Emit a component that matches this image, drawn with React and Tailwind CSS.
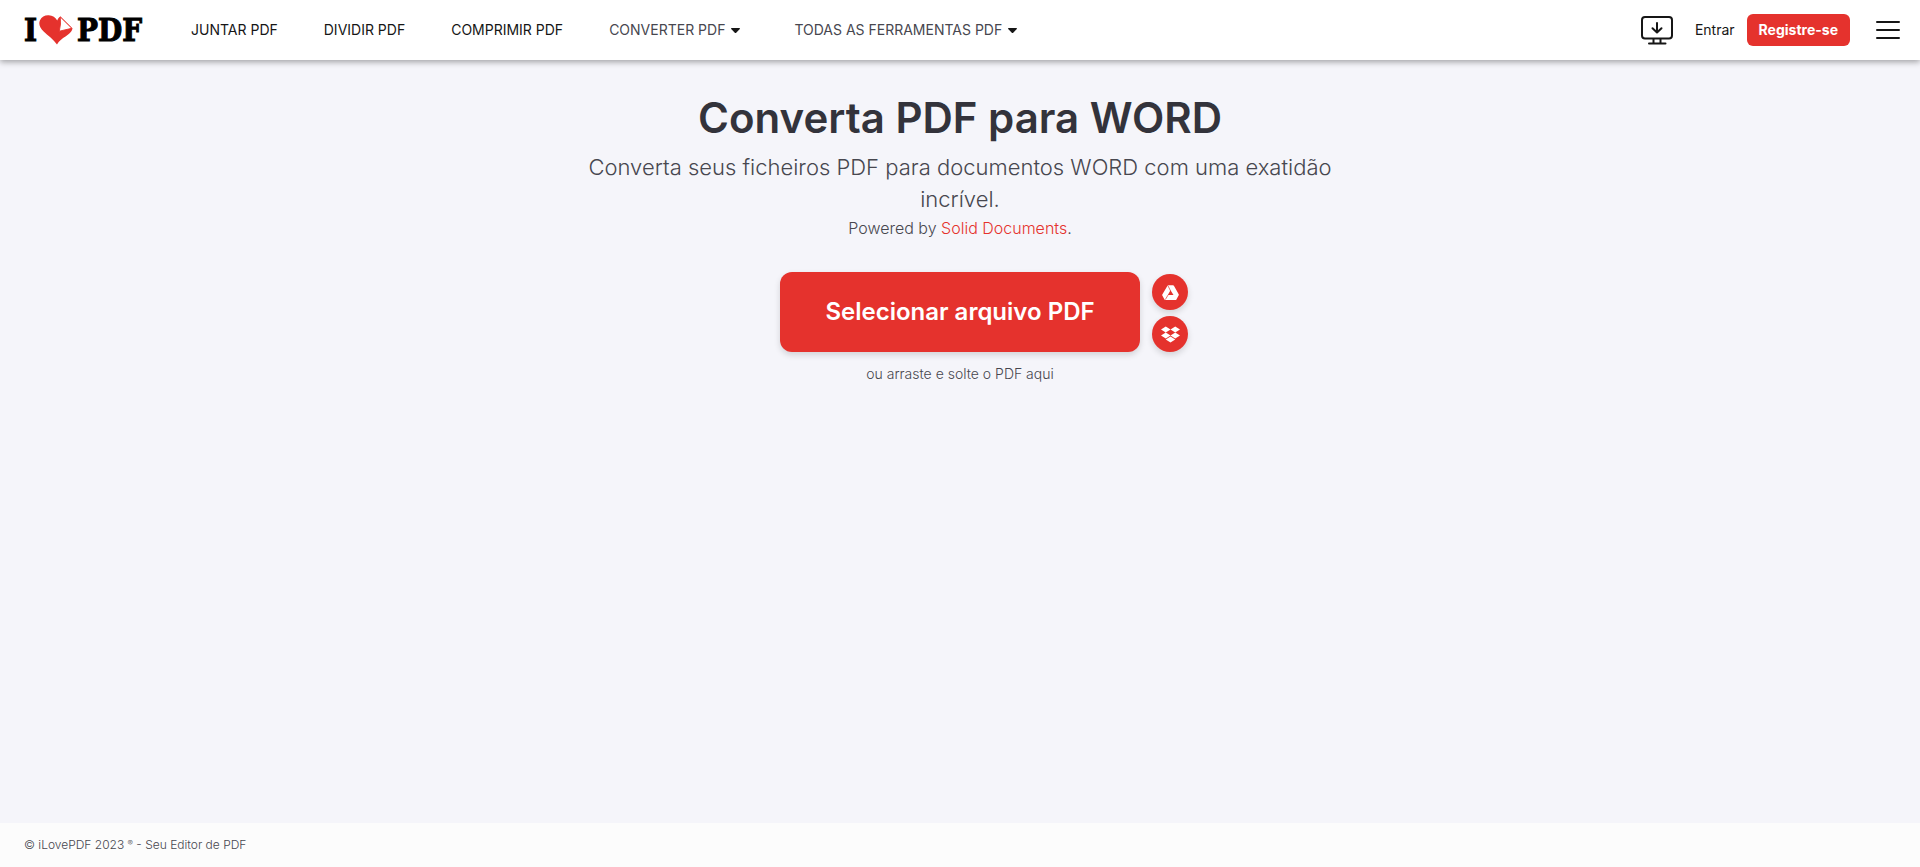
import { FaDropbox } from "react-icons/fa";

const mainLinks = ["JUNTAR PDF", "DIVIDIR PDF", "COMPRIMIR PDF"];
const menus = ["CONVERTER PDF", "TODAS AS FERRAMENTAS PDF"];

function Caret() {
  return (
    <svg className="h-[5px] w-[9px]" viewBox="0 0 9 5" aria-hidden="true">
      <path d="M0.6 0h7.8c.5 0 .7.5.4.9L5.2 4.7a1 1 0 0 1-1.4 0L.2.9C-.1.5.1 0 .6 0z" fill="#161616" />
    </svg>
  );
}

function Logo() {
  return (
    <a
      href="#"
      aria-label="iLovePDF"
      className="flex items-center font-['DejaVu_Serif_Condensed','DejaVu_Serif',serif] text-[31px] leading-8 font-bold text-black [-webkit-text-stroke:1px_#000]"
    >
      <span>I</span>
      <svg className="ml-0.5 h-[30px] w-[34px]" viewBox="0 0 34 30" aria-hidden="true">
        <path
          d="M18 29.400C14.600 24.400 8.800 20.600 4.400 16.200C.6 12.400-.6 8.600 1 5.200C2.600 1.600 6.200-.1 9.800.2C13.400.4 16.800 2.400 18.200 5.600C18.700 4 19.800 2.400 21.400 1.500L33.600 13.500C31.800 20.400 21.800 22.400 18 29.400z"
          fill="#e5322d"
        />
        <path d="M21.300 1.900L32.800 13.300L20.300 16.200Q22.200 9 21.300 1.900z" fill="#fff" stroke="#e5322d" strokeWidth="0.9" strokeLinejoin="round" />
      </svg>
      <span className="ml-1">PDF</span>
    </a>
  );
}

function DesktopIcon() {
  return (
    <svg
      className="h-[29px] w-8"
      viewBox="0 0 32 29"
      fill="none"
      stroke="#161616"
      strokeWidth="2"
      strokeLinecap="round"
      strokeLinejoin="round"
      aria-hidden="true"
    >
      <rect x="1" y="1" width="30" height="21.500" rx="3" />
      <path d="M16 7v9M11.500 12.200L16 16.500l4.500-4.300M12.500 23v4M19.500 23v4M8 27.500h16.500" />
    </svg>
  );
}

function DriveIcon() {
  return (
    <svg className="h-[15px] w-[17px]" viewBox="0 0 17 15" aria-hidden="true">
      <path
        d="M6.400.2h4.600q.6 0 .9.5l4.800 8.500q.3.500 0 1l-2.300 4.200q-.3.500-.9.500H3.400q-.6 0-.9-.5L.3 10.500q-.3-.5 0-1L5.500.7q.3-.5.9-.5z"
        fill="#fff"
      />
      <path d="M8.500 5.300L11.500 10.100H5.800z" fill="#e5322d" />
      <path d="M5.900.6L8.600 6M6.200 9.800L3.300 14.600" fill="none" stroke="#e5322d" strokeWidth="0.7" />
    </svg>
  );
}

export default function App() {
  return (
    <div className="flex min-h-screen flex-col bg-[#f5f5fa] font-['Inter',sans-serif] text-[#47474f]">
      <header className="relative flex h-[60px] items-center bg-white pr-5 pl-6 text-sm shadow-[0_2px_6px_rgba(0,0,0,0.35)]">
        <Logo />
        <nav className="ml-[26px] flex items-center">
          {mainLinks.map((label) => (
            <a key={label} href="#" className="px-[23px] text-[#161616]">
              {label}
            </a>
          ))}
          {menus.map((label) => (
            <button key={label} type="button" className="mr-2 flex items-center gap-1.5 px-[23px]">
              {label}
              <Caret />
            </button>
          ))}
        </nav>
        <div className="ml-auto flex items-center">
          <a href="#" aria-label="Desktop">
            <DesktopIcon />
          </a>
          <a href="#" className="ml-[22px] text-[#161616]">
            Entrar
          </a>
          <a href="#" className="ml-3 flex h-8 items-center rounded-md bg-[#e5322d] px-3 font-bold text-white">
            Registre-se
          </a>
          <button type="button" aria-label="Menu" className="ml-[26px]">
            <svg className="h-5 w-6" viewBox="0 0 24 20" stroke="#161616" strokeWidth="2" strokeLinecap="round" aria-hidden="true">
              <path d="M1 2h22M1 10h22M1 18h22" />
            </svg>
          </button>
        </div>
      </header>

      <main className="flex flex-1 flex-col items-center pt-8 text-center">
        <h1 className="text-[42px] leading-[51px] font-semibold text-[#33333b]">Converta PDF para WORD</h1>
        <p className="mt-2 max-w-[800px] text-[22px] leading-8 font-light">
          Converta seus ficheiros PDF para documentos WORD com uma exatidão incrível.
        </p>
        <p className="text-base leading-[26px] font-light">
          Powered by{" "}
          <a href="#" className="text-[#e5322d]">
            Solid Documents
          </a>
          .
        </p>
        <div className="relative mt-[31px]">
          <button
            type="button"
            className="h-20 min-w-[360px] rounded-xl bg-[#e5322d] px-11 text-2xl font-semibold text-white shadow-[0_3px_6px_rgba(0,0,0,0.14)]"
          >
            Selecionar arquivo PDF
          </button>
          <div className="absolute bottom-0 left-full ml-3 flex flex-col gap-1.5">
            <button
              type="button"
              aria-label="Google Drive"
              className="flex size-9 items-center justify-center rounded-full bg-[#e5322d] text-white shadow-[0_3px_6px_rgba(0,0,0,0.14)]"
            >
              <DriveIcon />
            </button>
            <button
              type="button"
              aria-label="Dropbox"
              className="flex size-9 items-center justify-center rounded-full bg-[#e5322d] text-white shadow-[0_3px_6px_rgba(0,0,0,0.14)]"
            >
              <FaDropbox size={19} />
            </button>
          </div>
        </div>
        <p className="mt-3 text-sm leading-5 font-light">ou arraste e solte o PDF aqui</p>
      </main>

      <footer className="flex h-11 items-center bg-[#fcfcfc] px-6 text-xs font-light">
        <p>
          © iLovePDF 2023 <span className="align-top text-[8px] leading-3">®</span> - Seu Editor de PDF
        </p>
      </footer>
    </div>
  );
}
